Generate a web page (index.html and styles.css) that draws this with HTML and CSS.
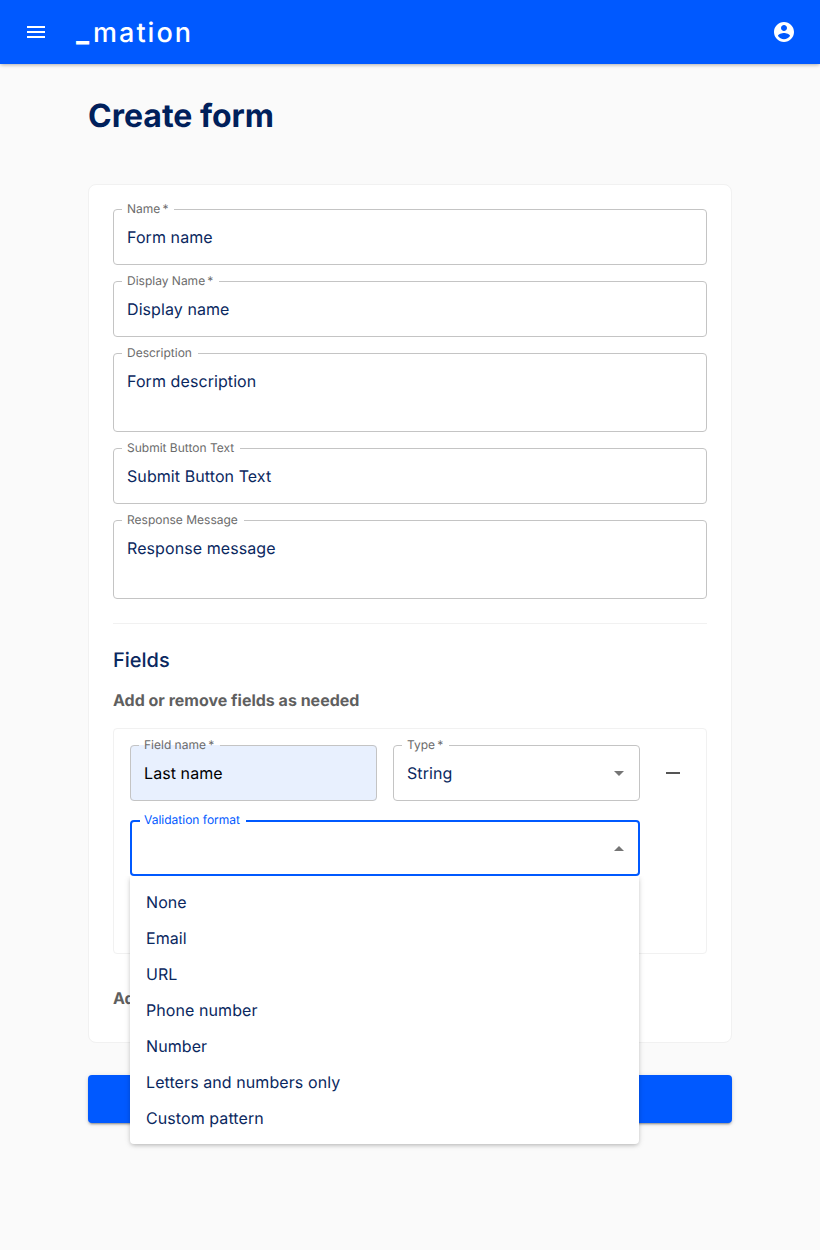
FILE: index.html
```html
<!DOCTYPE html>
<html lang="en">
<head>
<meta charset="utf-8">
<title>Create form</title>
<link rel="stylesheet" href="styles.css">
</head>
<body>
<header class="appbar">
  <div class="appbar-left">
    <svg class="icon icon-white" viewBox="0 0 24 24"><path d="M3 18h18v-2H3v2zm0-5h18v-2H3v2zm0-7v2h18V6H3z"/></svg>
    <span class="logo"><span class="logo-bar">_</span>mation</span>
  </div>
  <svg class="icon icon-white" viewBox="0 0 24 24"><path d="M12 2C6.48 2 2 6.48 2 12s4.48 10 10 10 10-4.48 10-10S17.52 2 12 2zm0 3c1.66 0 3 1.34 3 3s-1.34 3-3 3-3-1.34-3-3 1.34-3 3-3zm0 14.2c-2.5 0-4.71-1.28-6-3.22.03-1.99 4-3.08 6-3.08 1.99 0 5.97 1.09 6 3.08-1.29 1.94-3.5 3.22-6 3.22z"/></svg>
</header>

<main class="page">
  <h1 class="title">Create form</h1>

  <section class="card">
    <div class="stack">
      <fieldset class="field"><legend>Name&thinsp;*</legend><div class="value">Form name</div></fieldset>
      <fieldset class="field"><legend>Display Name&thinsp;*</legend><div class="value">Display name</div></fieldset>
      <fieldset class="field"><legend>Description</legend><div class="value value-multi">Form description</div></fieldset>
      <fieldset class="field"><legend>Submit Button Text</legend><div class="value">Submit Button Text</div></fieldset>
      <fieldset class="field"><legend>Response Message</legend><div class="value value-multi">Response message</div></fieldset>
    </div>

    <hr class="divider">

    <h2 class="section-title">Fields</h2>
    <p class="section-note">Add or remove fields as needed</p>

    <div class="field-card">
      <div class="field-grid">
        <fieldset class="field field-filled"><legend>Field name&thinsp;*</legend><div class="value value-dark">Last name</div></fieldset>
        <fieldset class="field"><legend>Type&thinsp;*</legend>
          <div class="value value-select">String
            <svg class="icon icon-grey" viewBox="0 0 24 24"><path d="M7 10l5 5 5-5z"/></svg>
          </div>
        </fieldset>
        <div class="remove">
          <svg class="icon icon-dark" viewBox="0 0 24 24"><path d="M19 13H5v-2h14v2z"/></svg>
        </div>
        <div class="select-open">
          <fieldset class="field field-focus"><legend>Validation format</legend>
            <div class="value value-select">
              <span></span>
              <svg class="icon icon-grey" viewBox="0 0 24 24"><path d="M7 14l5-5 5 5z"/></svg>
            </div>
          </fieldset>
          <ul class="menu">
            <li>None</li>
            <li>Email</li>
            <li>URL</li>
            <li>Phone number</li>
            <li>Number</li>
            <li>Letters and numbers only</li>
            <li>Custom pattern</li>
          </ul>
        </div>
      </div>
    </div>

    <p class="section-note add-note">Add field</p>
  </section>

  <button class="submit" type="button" aria-label="Create form"></button>
</main>
</body>
</html>
```
FILE: styles.css
```css
* { box-sizing: border-box; }

html, body {
  margin: 0;
  padding: 0;
}

body {
  min-height: 100vh;
  background: #fafafa;
  color: #00205b;
  font-family: Inter, "Liberation Sans", sans-serif;
  font-size: 16px;
  text-rendering: geometricPrecision;
}

.icon {
  display: block;
  width: 24px;
  height: 24px;
  flex: none;
}
.icon-white { fill: #fff; }
.icon-grey { fill: #757575; }
.icon-dark { fill: #555; }

.appbar {
  display: flex;
  align-items: center;
  justify-content: space-between;
  height: 64px;
  padding: 0 24px;
  background: #0059ff;
  box-shadow: 0 2px 4px -1px rgba(0,0,0,.2), 0 1px 3px 0 rgba(0,0,0,.12);
}

.appbar-left {
  display: flex;
  align-items: center;
  gap: 28px;
}

.logo {
  padding-top: 2px;
  color: #fff;
  font-size: 27px;
  font-weight: 500;
  line-height: 32px;
  letter-spacing: 2px;
  white-space: nowrap;
}

.logo-bar {
  display: inline-block;
  margin-right: 2px;
  font-weight: 800;
  transform: translateY(-1px);
}

.page {
  padding: 32px 88px 40px;
}

.title {
  margin: 0 0 48px;
  font-size: 32px;
  line-height: 40px;
  font-weight: 700;
}

.card {
  padding: 17px 24px 32px;
  background: #fff;
  border: 1px solid #f1f1f1;
  border-radius: 8px;
}

.stack {
  display: flex;
  flex-direction: column;
  gap: 9px;
}

.field {
  min-width: 0;
  margin: 0;
  padding: 0;
  border: 1px solid #c4c4c4;
  border-radius: 4px;
}

.field legend {
  margin-left: 8px;
  padding: 0 6px 1px 5px;
  color: #6b6b6b;
  font-size: 12px;
  line-height: 14px;
}

.value {
  height: 47px;
  padding: 8px 13px 15px;
  color: #0a2860;
  line-height: 24px;
  letter-spacing: .08px;
}

.value-multi { height: 70px; }
.value-dark { color: #000; }

.value-select {
  display: flex;
  justify-content: space-between;
  padding-right: 8px;
}

.divider {
  height: 1px;
  margin: 24px 0 22px;
  border: 0;
  background: #f1f1f1;
}

.section-title {
  margin: 0;
  color: #0a2860;
  font-size: 20px;
  line-height: 28px;
  font-weight: 500;
}

.section-note {
  margin: 14px 0 16px;
  color: #5f5f5f;
  font-size: 16px;
  line-height: 24px;
  font-weight: 700;
}

.add-note { margin: 32px 0 0; }

.field-card {
  height: 226px;
  padding: 9px 16px 0;
  border: 1px solid #f1f1f1;
  border-radius: 4px;
}

.field-grid {
  display: grid;
  grid-template-columns: 247px 247px 34px;
  column-gap: 16px;
  row-gap: 12px;
}

.field-filled { background: #e8f0fe; }

.remove {
  display: flex;
  justify-content: center;
  padding-top: 23px;
}

.select-open {
  position: relative;
  grid-column: 1 / span 2;
}

.field-focus {
  border: 2px solid #0059ff;
}

.field-focus legend {
  margin-left: 8px;
  padding: 0 6px 2px 4px;
  color: #0059ff;
}

.field-focus .value {
  height: 45px;
  padding-left: 12px;
  padding-right: 7px;
}

.menu {
  position: absolute;
  top: 100%;
  left: 0;
  right: 1px;
  margin: 0;
  padding: 8px 0;
  list-style: none;
  background: #fff;
  border-radius: 0 0 4px 4px;
  box-shadow: 0 2px 4px -1px rgba(0,0,0,.2), 0 1px 6px 0 rgba(0,0,0,.12);
  clip-path: inset(0 -10px -10px -10px);
}

.menu li {
  height: 36px;
  padding: 8px 16px;
  color: #0a2860;
  line-height: 20px;
  letter-spacing: .08px;
}

.submit {
  display: block;
  width: 100%;
  height: 48px;
  margin-top: 32px;
  border: 0;
  border-radius: 4px;
  background: #0059ff;
  box-shadow: 0 3px 1px -2px rgba(0,0,0,.2), 0 2px 2px 0 rgba(0,0,0,.14), 0 1px 5px 0 rgba(0,0,0,.12);
}
```
